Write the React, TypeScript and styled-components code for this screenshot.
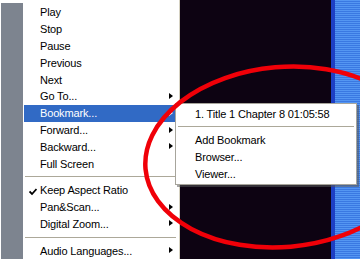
import React from "react";
import styled, { createGlobalStyle } from "styled-components";

const Global = createGlobalStyle`
  html, body { margin: 0; padding: 0; background: #ffffff; }
  body { font-family: "Liberation Sans", Arial, sans-serif; }
`;

const Screen = styled.div`
  position: relative;
  width: 360px;
  height: 259px;
  overflow: hidden;
  display: flex;
  background: #ffffff;
`;

const SideStrip = styled.div`
  width: 22px;
  margin: 3px 0 0 1px;
  background: #7d848f;
  flex: none;
`;

const Menu = styled.div`
  width: 153px;
  flex: none;
  background: #ffffff;
  padding: 4px 2px 0 1px;
  border-right: 1px solid #d6d2c2;
  display: flex;
  flex-direction: column;
`;

const Item = styled.div<{ $active?: boolean }>`
  position: relative;
  height: 17px;
  display: flex;
  align-items: center;
  padding-left: 16px;
  font-size: 11px;
  letter-spacing: -0.15px;
  color: ${(p) => (p.$active ? "#ffffff" : "#000000")};
  background: ${(p) => (p.$active ? "#316ac5" : "transparent")};
  white-space: nowrap;
`;

const Check = styled.span`
  position: absolute;
  left: 5px;
  top: 4px;
  width: 8px;
  height: 8px;
`;

const Arrow = styled.span<{ $active?: boolean }>`
  position: absolute;
  right: 4px;
  top: 5px;
  width: 0;
  height: 0;
  border-top: 3.5px solid transparent;
  border-bottom: 3.5px solid transparent;
  border-left: 4px solid ${(p) => (p.$active ? "#ffffff" : "#000000")};
`;

const Separator = styled.div<{ $h: number }>`
  height: ${(p) => p.$h}px;
  display: flex;
  align-items: center;
  padding: 0 1px;
  &::after {
    content: "";
    flex: 1;
    height: 1px;
    background: #aca899;
  }
`;

const Video = styled.div`
  flex: 1;
  background: #0d0312;
`;

const BlueEdge = styled.div`
  width: 4px;
  flex: none;
  background: #1d3fc4;
`;

const Stripes = styled.div`
  width: 25px;
  flex: none;
  background: repeating-linear-gradient(
    to bottom,
    #5496f2 0px,
    #5496f2 1px,
    #3a78e2 1px,
    #3a78e2 2px
  );
`;

const SubMenu = styled.div`
  position: absolute;
  left: 175px;
  top: 103px;
  width: 178px;
  background: #ffffff;
  border: 1px solid #a7a59c;
  box-shadow: 2px 2px 0 rgba(90, 90, 90, 0.55);
  padding: 1px 1px 2px 1px;
  display: flex;
  flex-direction: column;
`;

const SubItem = styled.div`
  height: 17px;
  display: flex;
  align-items: center;
  padding-left: 18px;
  font-size: 11px;
  letter-spacing: -0.15px;
  color: #000000;
  white-space: nowrap;
`;

const Overlay = styled.svg`
  position: absolute;
  left: 0;
  top: 0;
  width: 360px;
  height: 259px;
  pointer-events: none;
`;

type Entry =
  | { label: string; sub?: boolean; active?: boolean; checked?: boolean }
  | { sep: number };

const entries: Entry[] = [
  { label: "Play" },
  { label: "Stop" },
  { label: "Pause" },
  { label: "Previous" },
  { label: "Next" },
  { label: "Go To...", sub: true },
  { label: "Bookmark...", sub: true, active: true },
  { label: "Forward...", sub: true },
  { label: "Backward...", sub: true },
  { label: "Full Screen" },
  { sep: 10 },
  { label: "Keep Aspect Ratio", checked: true },
  { label: "Pan&Scan...", sub: true },
  { label: "Digital Zoom...", sub: true },
  { sep: 10 },
  { label: "Audio Languages...", sub: true },
];

export default function App() {
  return (
    <>
      <Global />
      <Screen>
        <SideStrip />
        <Menu>
          {entries.map((e, i) =>
            "sep" in e ? (
              <Separator key={i} $h={e.sep} />
            ) : (
              <Item key={i} $active={e.active}>
                {e.checked && (
                  <Check>
                    <svg width="8" height="8" viewBox="0 0 8 8">
                      <path
                        d="M0.5 3.5 L3 6 L7.5 1"
                        fill="none"
                        stroke="#000"
                        strokeWidth="1.8"
                      />
                    </svg>
                  </Check>
                )}
                {e.label}
                {e.sub && <Arrow $active={e.active} />}
              </Item>
            )
          )}
        </Menu>
        <Video />
        <BlueEdge />
        <Stripes />
        <SubMenu>
          <SubItem>1. Title 1 Chapter 8 01:05:58</SubItem>
          <Separator $h={9} />
          <SubItem>Add Bookmark</SubItem>
          <SubItem>Browser...</SubItem>
          <SubItem>Viewer...</SubItem>
        </SubMenu>
        <Overlay viewBox="0 0 360 259">
          <ellipse
            cx="283"
            cy="157"
            rx="138"
            ry="90"
            transform="rotate(-5 283 157)"
            fill="none"
            stroke="#f00008"
            strokeWidth="4.5"
          />
        </Overlay>
      </Screen>
    </>
  );
}
